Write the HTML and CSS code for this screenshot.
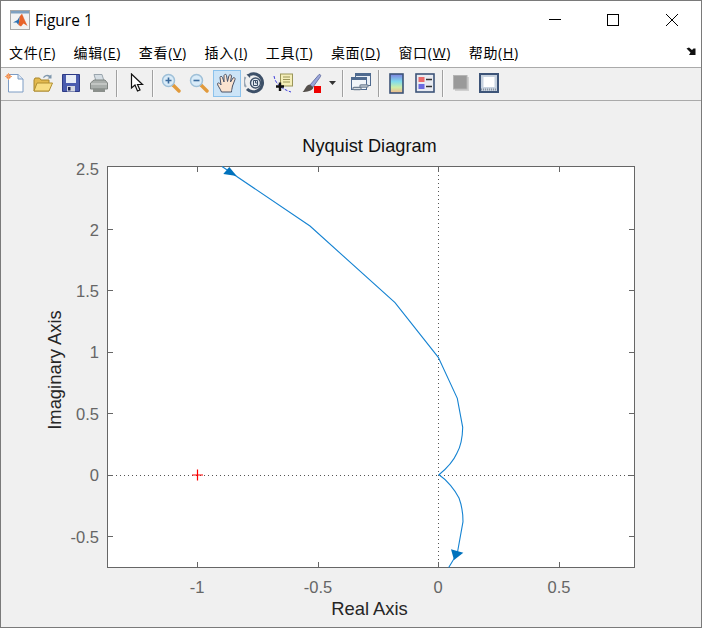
FILE: index.html
```html
<!DOCTYPE html>
<html lang="en">
<head>
    <meta charset="UTF-8">
    <meta name="viewport" content="width=device-width, initial-scale=1.0">
    <title>Figure 1</title>
    <link rel="stylesheet" href="styles.css">
</head>
<body>
<div class="window">
    <!-- Title bar -->
    <div class="titlebar">
        <svg class="app-icon" width="20" height="20" viewBox="0 0 20 20">
            <rect x="0.5" y="0.5" width="19" height="19" fill="#f2f2f2" stroke="#a8a8a8"/>
            <rect x="1" y="1" width="18" height="2.5" fill="#7ea0c0"/>
            <path d="M3 12.5 L7.5 10 L10 6 L8.5 15 L6.5 12.5 Z" fill="#2a6fb0"/>
            <path d="M10 6 L12 3.8 L14 9 L17.5 16 L13.5 13.5 L11 16.5 L8.5 15 Z" fill="#e8642a"/>
            <path d="M12 3.8 L14 9 L17.5 16 L14.5 9.5 Z" fill="#c43a1c"/>
        </svg>
        <span class="title-text">Figure 1</span>
        <div class="win-controls">
            <div class="win-btn">
                <svg width="14" height="14" viewBox="0 0 14 14"><path d="M1 6.5H13" stroke="#000"/></svg>
            </div>
            <div class="win-btn">
                <svg width="14" height="14" viewBox="0 0 14 14"><rect x="1.5" y="1.5" width="11" height="11" fill="none" stroke="#000"/></svg>
            </div>
            <div class="win-btn">
                <svg width="14" height="14" viewBox="0 0 14 14"><path d="M1 1L13 13M13 1L1 13" stroke="#000"/></svg>
            </div>
        </div>
    </div>

    <!-- Menu bar -->
    <div class="menubar">
        <span class="menu-item">文件(<u>F</u>)</span>
        <span class="menu-item">编辑(<u>E</u>)</span>
        <span class="menu-item">查看(<u>V</u>)</span>
        <span class="menu-item">插入(<u>I</u>)</span>
        <span class="menu-item">工具(<u>T</u>)</span>
        <span class="menu-item">桌面(<u>D</u>)</span>
        <span class="menu-item">窗口(<u>W</u>)</span>
        <span class="menu-item">帮助(<u>H</u>)</span>
        <svg class="dock-arrow" width="10" height="9" viewBox="0 0 10 9">
            <path d="M0.5 1.5 L3 0.5 L6 3 L7.5 1.5 L9.5 1.5 L9.5 8 L3 8 L4.5 5.5 Z" fill="#111"/>
        </svg>
    </div>

    <!-- Toolbar -->
    <div class="toolbar">
        <div class="tool">
            <svg width="20" height="20" viewBox="0 0 20 20">
                <path d="M3.5 1.5H13L18 6V19H3.5Z" fill="#fff" stroke="#7d9cc4"/>
                <path d="M13 1.5V6H18" fill="#dbe6f3" stroke="#7d9cc4"/>
                <circle cx="3.5" cy="3.5" r="2.4" fill="#f0884a"/>
                <path d="M3.5 0V7M0 3.5H7" stroke="#f5a46a"/>
            </svg>
        </div>
        <div class="tool">
            <svg width="20" height="20" viewBox="0 0 20 20">
                <path d="M1 7V18H16V7L8 7L6.5 5H2Z" fill="#e3b94e" stroke="#a8862c"/>
                <path d="M1 18L4 10H19.5L16 18Z" fill="#f8dd82" stroke="#b08e30"/>
                <path d="M10 4.5C11.5 2 14 1 17 2.5L18.5 1.5V5.5H14.5L16 4C14.5 3 12.5 3 11 5" fill="#7f97ad"/>
            </svg>
        </div>
        <div class="tool">
            <svg width="20" height="20" viewBox="0 0 20 20">
                <path d="M1.5 1.5H18.5V18.5H1.5Z" fill="#4a5cae" stroke="#2d3a85"/>
                <rect x="5" y="2" width="10" height="8" fill="#e8edf6"/>
                <rect x="6" y="13" width="8" height="5.5" fill="#d4d8e2"/>
                <rect x="7" y="14" width="2.5" height="3.5" fill="#1d2350"/>
            </svg>
        </div>
        <div class="tool">
            <svg width="20" height="20" viewBox="0 0 20 20">
                <path d="M5 1.5H13L15 8H7Z" fill="#d5dde3" stroke="#9aa5ad"/>
                <path d="M1.5 10L5 7H16L18.5 10V16H1.5Z" fill="#a9aeab" stroke="#7f8481"/>
                <path d="M2 11H18" stroke="#dcdedc"/>
                <path d="M4 15.5H16V19H4Z" fill="#8b908c"/>
            </svg>
        </div>
        <div class="sep"></div>
        <div class="tool">
            <svg class="pointer-icon" width="14" height="20" viewBox="0 0 14 20">
                <path d="M1.5 1V15L5 12L7.5 18L10 17L7.5 11.5L12.5 11.5Z" fill="#fff" stroke="#111" stroke-width="1.2"/>
            </svg>
        </div>
        <div class="sep"></div>
        <div class="tool">
            <svg width="20" height="20" viewBox="0 0 20 20">
                <path d="M12 12L18 18" stroke="#e19a3c" stroke-width="3.4" stroke-linecap="round"/>
                <circle cx="7.5" cy="7.5" r="6" fill="#d9ebf8" stroke="#9fc0d8" stroke-width="1.5"/>
                <path d="M4.5 7.5H10.5M7.5 4.5V10.5" stroke="#3a6a9c" stroke-width="1.6"/>
            </svg>
        </div>
        <div class="tool">
            <svg width="20" height="20" viewBox="0 0 20 20">
                <path d="M12 12L18 18" stroke="#e19a3c" stroke-width="3.4" stroke-linecap="round"/>
                <circle cx="7.5" cy="7.5" r="6" fill="#d9ebf8" stroke="#9fc0d8" stroke-width="1.5"/>
                <path d="M4.5 7.5H10.5" stroke="#3a6a9c" stroke-width="1.6"/>
            </svg>
        </div>
        <div class="tool tool-active">
            <svg width="22" height="22" viewBox="0 0 22 22">
                <path d="M5.5 20C4 16 1 13 1.5 11.5C2.5 10 4.5 12 5 13L4 5.5C4 4 6 4 6.5 5.5L8 10L8 3.5C8.5 2 10.5 2 10.5 3.5L11.5 9.5L13 3.5C13.5 2.5 15.5 2.5 15.5 4L14.5 10L17 6C18 5 19.5 6 19 7.5L16.5 14C16 17 15.5 18 15.5 20Z" fill="#fbe3cf" stroke="#4a5266" stroke-width="1" stroke-linejoin="round"/>
            </svg>
        </div>
        <div class="tool">
            <svg width="22" height="22" viewBox="0 0 22 22">
                <path d="M6 2.5A9 9 0 1 1 3 17" fill="none" stroke="#3d5068" stroke-width="3"/>
                <path d="M1.5 5A9 9 0 0 0 2 15" fill="none" stroke="#9aa7b5" stroke-width="2"/>
                <path d="M7 1L2.5 2.5L6 6Z" fill="#3d5068"/>
                <circle cx="11.5" cy="11" r="5" fill="#e4ebf2" stroke="#3d5068" stroke-width="1.4"/>
                <path d="M9.5 8.5H13.5V13.5H9.5ZM11.5 8.5V11H13.5" fill="none" stroke="#3d5068"/>
            </svg>
        </div>
        <div class="tool">
            <svg width="21" height="21" viewBox="0 0 21 21">
                <path d="M1 3C2 9 6 15 18 19" fill="none" stroke="#3b3bdc" stroke-dasharray="3 1.5"/>
                <rect x="7.5" y="1" width="12" height="12" fill="#f4eeb8" stroke="#9a9558"/>
                <path d="M10 4H17M10 6.5H17M10 9H17" stroke="#9a9558"/>
                <path d="M7 9.5V18M3 13.5H11" stroke="#111" stroke-width="2.4"/>
            </svg>
        </div>
        <div class="tool">
            <svg width="21" height="21" viewBox="0 0 21 21">
                <path d="M9 12L18 1.5C19.5 1 20 2.5 19.5 3.5L12 14Z" fill="#9aa6da" stroke="#6e78a8"/>
                <path d="M8.5 11.5L12.5 14.5C11 18 6 19 1.5 19C4 17 4.5 12.5 8.5 11.5Z" fill="#55504c"/>
                <rect x="13" y="13" width="7" height="7" fill="#ee0000"/>
            </svg>
        </div>
        <div class="tool-drop">
            <svg width="7" height="4" viewBox="0 0 7 4"><path d="M0 0H7L3.5 4Z" fill="#333"/></svg>
        </div>
        <div class="sep"></div>
        <div class="tool">
            <svg width="20" height="20" viewBox="0 0 20 20">
                <rect x="4.5" y="0.5" width="15" height="12" fill="#e9eff6" stroke="#4f6a8f"/>
                <rect x="4.5" y="0.5" width="15" height="2.5" fill="#4f6a8f"/>
                <rect x="0.5" y="4.5" width="15" height="12" fill="#f1f5f9" stroke="#4f6a8f"/>
                <rect x="0.5" y="4.5" width="15" height="2.5" fill="#4f6a8f"/>
                <path d="M3 15.5H9M10 13H16" stroke="#6f7f92" stroke-width="3.4" stroke-linecap="round"/>
                <path d="M3 15.5H9M10 13H16" stroke="#d8dfe6" stroke-width="1.2" stroke-linecap="round"/>
            </svg>
        </div>
        <div class="sep"></div>
        <div class="tool">
            <svg width="16" height="21" viewBox="0 0 16 21">
                <defs>
                    <linearGradient id="cbar" x1="0" y1="0" x2="0" y2="1">
                        <stop offset="0" stop-color="#7f7fe0"/>
                        <stop offset="0.4" stop-color="#7fdcec"/>
                        <stop offset="0.7" stop-color="#cdeea8"/>
                        <stop offset="1" stop-color="#f2b58a"/>
                    </linearGradient>
                </defs>
                <rect x="1" y="1" width="13" height="19" fill="url(#cbar)" stroke="#3d5478" stroke-width="1.6"/>
            </svg>
        </div>
        <div class="tool">
            <svg width="20" height="20" viewBox="0 0 20 20">
                <rect x="1" y="1" width="18" height="18" fill="#e8ebf2" stroke="#3d5478" stroke-width="1.6"/>
                <rect x="3.5" y="4" width="6" height="5" fill="#ea6a6a"/>
                <rect x="3.5" y="11" width="6" height="5" fill="#6a6ae0"/>
                <path d="M11 6.5H17M11 13.5H17" stroke="#333" stroke-width="1.5"/>
            </svg>
        </div>
        <div class="sep"></div>
        <div class="tool">
            <svg width="16" height="16" viewBox="0 0 16 16">
                <rect x="2" y="2" width="14" height="14" fill="#d0d0d0"/>
                <rect x="0.5" y="0.5" width="13.5" height="13.5" fill="#9a9a9a" stroke="#b4b4b4"/>
            </svg>
        </div>
        <div class="tool">
            <svg width="20" height="20" viewBox="0 0 20 20">
                <rect x="1" y="1" width="18" height="18" fill="#c8d3e0" stroke="#3d5478" stroke-width="2"/>
                <rect x="4.5" y="4" width="11" height="10" fill="#fff"/>
                <path d="M2 16.5H18" stroke="#8a94a0" stroke-width="2" stroke-dasharray="1 1"/>
            </svg>
        </div>
    </div>

    <!-- Figure area, the plot is a free canvas so it uses page coordinates -->
    <div class="figure">
        <svg class="plot" width="700" height="526" viewBox="1 101 700 526">
            <rect class="axes-bg" x="107.5" y="166.5" width="527" height="401"/>

            <path class="grid" d="M438.5 167V568M108 475.5H634"/>

            <path class="tick" d="M197.5 167v5M318.5 167v5M438.5 167v5M559.5 167v5
                M197.5 567v-5M318.5 567v-5M438.5 567v-5M559.5 567v-5
                M108 229.5h5M108 290.5h5M108 352.5h5M108 413.5h5M108 475.5h5M108 536.5h5
                M634 229.5h-5M634 290.5h-5M634 352.5h-5M634 413.5h-5M634 475.5h-5M634 536.5h-5"/>
            <rect class="axes-box" x="107.5" y="166.5" width="527" height="401"/>

            <path class="curve" d="M222 166.5L310 226L395 302.7L438.3 357.3L457.3 398.3L462.7 427.3
                C462.5 437 461 446 457 453C453 462 446 469 439 474.7
                C447 480 455 490 459 498C462 506 463 514 463 521.7L457.3 553.3L448.7 567.5"/>
            <path class="arrow" d="M229.3 167L236.7 176L223.3 174Z"/>
            <path class="arrow" d="M451 549.3L463.3 552.7L454 560Z"/>
            <path class="marker" d="M192 475H203M197.5 469.5V480.5"/>

            <text class="plot-title" x="369.5" y="152">Nyquist Diagram</text>

            <text class="ytick" x="99" y="175">2.5</text>
            <text class="ytick" x="99" y="236">2</text>
            <text class="ytick" x="99" y="297">1.5</text>
            <text class="ytick" x="99" y="358">1</text>
            <text class="ytick" x="99" y="420">0.5</text>
            <text class="ytick" x="99" y="481">0</text>
            <text class="ytick" x="99" y="543">-0.5</text>

            <text class="xtick" x="197" y="593">-1</text>
            <text class="xtick" x="318" y="593">-0.5</text>
            <text class="xtick" x="438" y="593">0</text>
            <text class="xtick" x="559" y="593">0.5</text>

            <text class="axis-label" x="369.5" y="615">Real Axis</text>
            <text class="axis-label" transform="translate(60.5 370) rotate(-90)">Imaginary Axis</text>
        </svg>
    </div>
</div>
</body>
</html>
```

FILE: styles.css
```css
html, body {
    margin: 0;
    padding: 0;
    background-color: #f0f0f0;
}
.window {
    width: 702px;
    height: 628px;
    box-sizing: border-box;
    border: 1px solid #7a7a7a;
    display: flex;
    flex-direction: column;
    overflow: hidden;
}
.titlebar {
    height: 37px;
    background-color: #fff;
    display: flex;
    align-items: center;
    padding-left: 9px;
}
.app-icon {
    flex: none;
}
.title-text {
    margin-left: 5px;
    font-family: "Open Sans", sans-serif;
    font-size: 15.5px;
    color: #000;
}
.win-controls {
    margin-left: auto;
    display: flex;
}
.win-btn {
    width: 58.5px;
    height: 37px;
    display: flex;
    align-items: center;
    justify-content: center;
}
.menubar {
    height: 30px;
    box-sizing: border-box;
    background-color: #fff;
    border-bottom: 1px solid #aaa;
    display: flex;
    align-items: center;
    gap: 17.6px;
    padding-left: 8px;
    padding-bottom: 2px;
    font-family: "Open Sans", "Noto Sans CJK SC", sans-serif;
    font-size: 14px;
    letter-spacing: 0.7px;
    color: #000;
}
.menu-item {
    white-space: nowrap;
}
.dock-arrow {
    margin-left: auto;
    margin-right: 5px;
}
.toolbar {
    height: 33px;
    box-sizing: border-box;
    background-color: #f0f0f0;
    border-bottom: 1px solid #aaa;
    display: flex;
    align-items: center;
    padding-bottom: 2px;
}
.tool {
    width: 28px;
    height: 27px;
    box-sizing: border-box;
    flex: none;
    display: flex;
    align-items: center;
    justify-content: center;
}
.tool-active {
    background-color: #cce4f7;
    border: 1px solid #8cc2ec;
}
.tool-drop {
    width: 14px;
    flex: none;
    display: flex;
    justify-content: center;
}
.pointer-icon {
    margin-left: 4px;
}
.sep {
    width: 1px;
    height: 27px;
    flex: none;
    margin: 0 3px 0 3px;
    background-color: #a0a0a0;
    border-right: 1px solid #fafafa;
}
.figure {
    flex: 1;
    background-color: #f0f0f0;
    min-height: 0;
}
.plot {
    display: block;
}
.axes-bg {
    fill: #fff;
}
.axes-box {
    fill: none;
    stroke: #666;
    stroke-width: 1;
}
.tick {
    fill: none;
    stroke: #666;
    stroke-width: 1;
}
.grid {
    fill: none;
    stroke: #555;
    stroke-width: 1;
    stroke-dasharray: 1 3;
}
.curve {
    fill: none;
    stroke: #1583d2;
    stroke-width: 1.1;
}
.arrow {
    fill: #0072bd;
}
.marker {
    fill: none;
    stroke: #f00;
    stroke-width: 1.2;
}
.plot text {
    font-family: "Liberation Sans", Arial, sans-serif;
}
.plot-title {
    font-size: 18.2px;
    fill: #111;
    text-anchor: middle;
}
.ytick {
    font-size: 16.5px;
    fill: #666;
    text-anchor: end;
}
.xtick {
    font-size: 16.5px;
    fill: #666;
    text-anchor: middle;
}
.axis-label {
    font-size: 18.4px;
    fill: #262626;
    text-anchor: middle;
}
```
